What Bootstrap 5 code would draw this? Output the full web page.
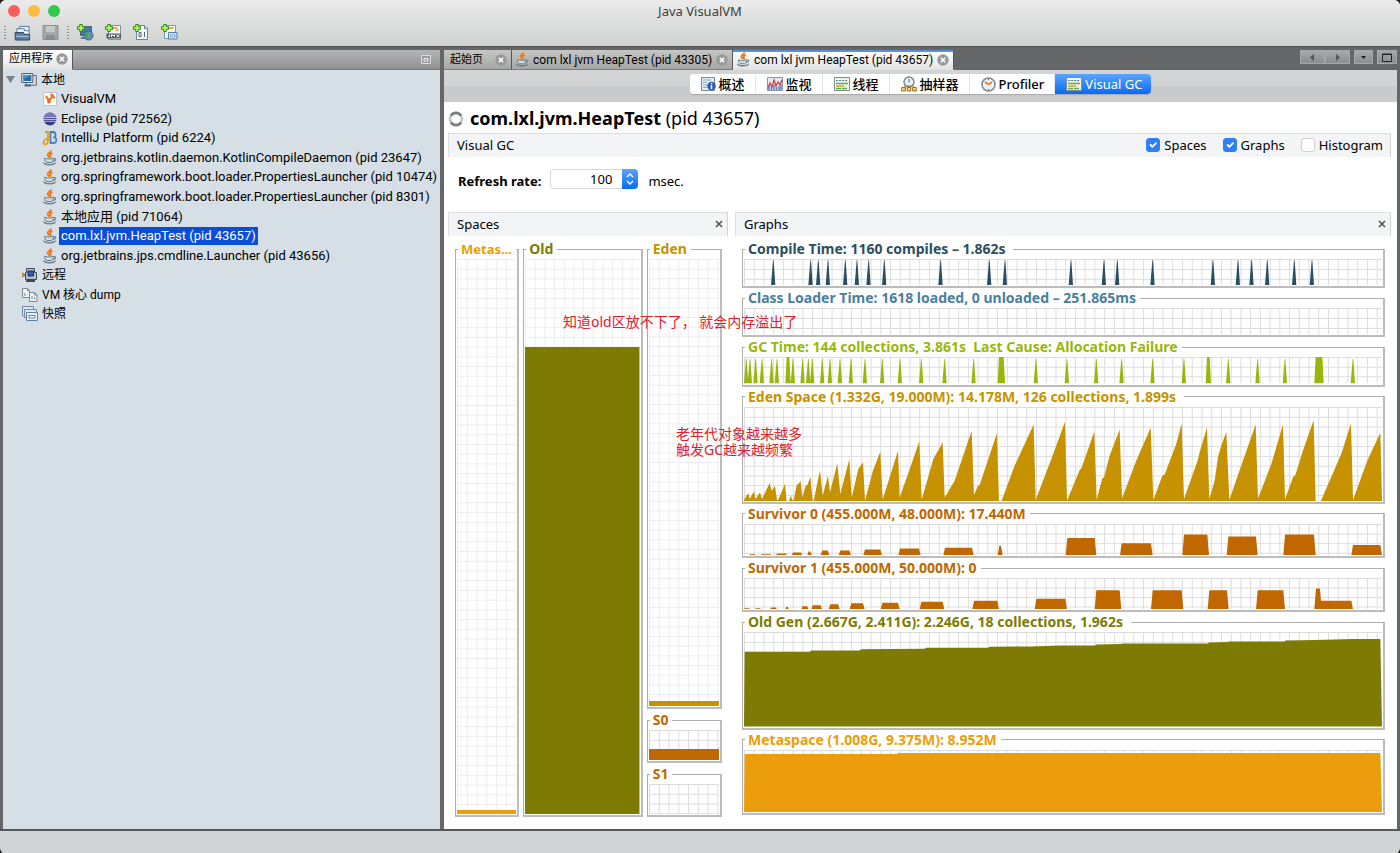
<!DOCTYPE html>
<html lang="zh-CN">
<head>
<meta charset="utf-8">
<meta name="viewport" content="width=device-width, initial-scale=1">
<title>Java VisualVM</title>
<link rel="stylesheet" href="https://cdn.jsdelivr.net/npm/bootstrap@5.3.0/dist/css/bootstrap.min.css">
<style>
  body { font: 13px/16px "Noto Sans", "Noto Sans CJK SC", sans-serif; color: #000; background: #1c1c1c; }
  button, input { font: inherit; color: inherit; }
  svg { display: block; flex: none; }
  .frame { min-height: 100vh; background: #d1d3d4; border-radius: 6px; overflow: hidden; }
  .titlebar { background: linear-gradient(#ebebeb, #cfd0d0); border-bottom: 1px solid #4f5254; }
  .caption { height: 22px; line-height: 22px; color: #3c3c3c; }
  .lights { position: absolute; left: 8px; top: 5px; }
  .light { width: 12px; height: 12px; border-radius: 50%; }
  .toolbar-row { height: 24px; padding: 0 4px 3px; }
  .tools { gap: 11px; }
  .grip { width: 2px; height: 14px; background: repeating-linear-gradient(#8f8f8f 0 1px, transparent 1px 3px); }
  .bare { border: 0; background: none; padding: 0; }
  .workspace { background: #646668; padding: 3px 3px 0; gap: 4px; border-bottom: 2px solid #55585a; }
  .side { width: 437px; background: #d5dfe5; flex: none; }
  .side-tabs { height: 20px; background: linear-gradient(#b4b5b7, #909193); border-bottom: 1px solid #77797b; }
  .doc-tabs { height: 20px; background: #656668; }
  .tab-item { font: 12px/18px Roboto, "Noto Sans CJK SC", sans-serif; gap: 3px; padding-left: 3px; background: linear-gradient(#c6c7c4, #a6a7a5); border-right: 1px solid #55585a; border-bottom: 1px solid #7a7c7e; height: 20px; color: #000; white-space: nowrap; }
  .tab-item.cjk { font-size: 11px; padding-left: 6px; }
  .tab-item.current { background: linear-gradient(#fff, #e2e4e6); border-bottom-color: #dfe1e3; }
  .doc-tabs .tab-item.current { box-shadow: inset 0 2px #5a90dc; }
  .doc-tab { width: 221px; }
  .home-tab { width: 68px; }
  .navbtn { height: 14px; border: 1px solid #a6a7a8; background: linear-gradient(#a8a9aa, #8b8c8d); display: flex; align-items: center; justify-content: center; }
  .tree { height: 254px; display: grid; grid-auto-rows: 1fr; font: 13px/18px Roboto, "Noto Sans CJK SC", sans-serif; padding: 0 0 0 3px; margin: 0; list-style: none; white-space: nowrap; }
  .tree li { display: flex; align-items: center; gap: 2px; }
  .tree .cjk { font-size: 12px; }
  .tree li.child { padding-left: 36px; gap: 1px; }
  .tree li.top { padding-left: 16px; }
  .tree a { color: #000; text-decoration: none; padding: 0 2px; }
  .tree a.sel { background: #0a4ed8; color: #fff; }
  .seg-strip { height: 32px; background: linear-gradient(#d3d4d6 50%, #c9cacb 50%); }
  .seg { height: 20px; border-radius: 4px; background: #fff; box-shadow: 0 1px 1px #aaa; overflow: hidden; }
  .seg button { border: 0; background: #fff; border-right: 1px solid #e6e6e6; padding: 0 10px 0 11px; display: flex; align-items: center; gap: 3px; white-space: nowrap; }
  .seg button.active { background: linear-gradient(#5ba4fb, #0a6af5); color: #fff; border: 0; padding: 0 9px 0 11px; }
  .seg span { font-weight: 500; }
  .page { background: #fff; padding: 0 6px 0 4px; }
  .heading { font-size: 18px; line-height: 22px; padding-top: 5px; height: 31px; margin: 0; font-weight: 400; gap: 6px; }
  .bar { background: #f2f4f5; border-top: 1px solid #dcdedf; border-left: 1px solid #dcdedf; border-right: 1px solid #d0d2d3; height: 24px; padding: 0 7px 1px 8px; }
  .bar .form-check-input { width: 14px; height: 14px; margin: 0; border-radius: 3px; border-color: #cfcfcf; }
  .bar .form-check-input:checked { background-color: #2f7ff5; border-color: #2f7ff5; }
  .rate { height: 55px; padding: 12px 0 0 10px; }
  .spin { width: 88px; height: 20px; margin: 0 10px 0 9px; }
  .spin input { width: 72px; border: 1px solid #d9d9d9; border-right: 0; border-radius: 4px 0 0 4px; padding: 0 10px 0 4px; text-align: right; }
  .spin button { width: 16px; border: 0; padding: 0; border-radius: 0 4px 4px 0; background: linear-gradient(#5ba4fb, #0a6af5); display: flex; align-items: center; justify-content: center; }
  .panes { gap: 7px; padding-bottom: 12px; position: relative; }
  .spaces { width: 280px; flex: none; }
  .spaces-body { padding: 5px 6px 0 7px; display: grid; grid-template-columns: 64fr 119fr 75fr; gap: 4px; }
  .graphs-body { padding: 5px 6px 2px 7px; gap: 2px; }
  fieldset { display: flex; flex-direction: column; border: 1px solid #adadad; border-right: 2px solid #bcbcbc; border-bottom: 2px solid #bcbcbc; padding: 2px 1px 1px; margin: 0; min-width: 0; min-height: 0; }
  legend { float: none; width: auto; font-size: 14px; line-height: 16px; height: 16px; font-weight: 700; margin: 0 0 0 1px; padding: 0 4px 0 3px; white-space: pre; }
  .w-meta legend { font-size: 13px; }
  .plot { width: 100%; flex: 1 1 0; min-height: 0; }
  .c-compile { color: #2b4f62; } .c-class { color: #4a7f9d; } .c-gc { color: #99b70a; }
  .c-eden { color: #c69200; } .c-surv { color: #c16700; } .c-old { color: #7d7b03; } .c-meta { color: #eb9d0d; }
  .tiny { flex: 47 1 47px; } .small-plot { flex: 52 1 52px; } .tall { flex: 115 1 115px; } .mid { flex: 83 1 83px; }
  .w-eden { gap: 3px; min-width: 0; }
  .h-eden { flex: 468 1 468px; } .h-surv { flex: 51 1 51px; }
  .note { position: absolute; color: #e0202c; font-size: 14px; line-height: 16px; white-space: nowrap; }
  .note-a { left: 115px; top: 102px; } .note-b { left: 228px; top: 214px; }
  .status { height: 23px; }
</style>
</head>
<body>
<svg width="0" height="0" class="position-absolute" aria-hidden="true">
  <defs>
    <pattern id="grid" width="29.2" height="29.2" patternUnits="userSpaceOnUse"><path d="M0 1.5H29.2M1.5 0V29.2" stroke="#dcdcdf" stroke-width="3" fill="none"/></pattern>
    <pattern id="faint" width="29.2" height="29.2" patternUnits="userSpaceOnUse"><path d="M0 1.5H29.2M1.5 0V29.2" stroke="#ededef" stroke-width="3" fill="none"/></pattern>
    <symbol id="java" viewBox="0 0 16 16">
      <path d="M8.6.4c1 2-3.200 2.700-2.900 4.700.1 1 1.300 1.500 1.300 2.700M10.400 3c-1.700.7-2.600 1.500-2.200 2.600.3.800.8 1.200.1 2.300" fill="none" stroke="#ee7a1c" stroke-width="1.900"/>
      <path d="M2.600 8.300c2 .9 6.700.9 8.900 0 .1 2-.7 3.800-2.300 4.200H5C3.300 12.100 2.500 10.300 2.600 8.300Z" fill="#d3dde1" stroke="#64808f"/>
      <path d="M11.500 8.700c3-.9 3 2.500-1 2.600" fill="none" stroke="#64808f" stroke-width="1.100"/>
      <path d="M1.300 12.700c2.700 2.300 9.600 2.300 12.300 0-.3 3.100-11.700 3.200-12.300 0Z" fill="#9db2ba" stroke="#5c7582" stroke-width=".8"/>
    </symbol>
    <symbol id="close" viewBox="0 0 12 12"><circle cx="6" cy="6" r="5.700" fill="#97999a"/><path d="M3.800 3.800l4.400 4.400M8.200 3.800L3.800 8.200" stroke="#fff" stroke-width="1.600"/></symbol>
    <symbol id="cross" viewBox="0 0 8 8"><path d="M1 1l6 6M7 1L1 7" stroke="#555" stroke-width="1.600"/></symbol>
    <symbol id="plus" viewBox="0 0 8 8"><path d="M2.700.5h2.600v2.200h2.200v2.600H5.300v2.200H2.700V5.300H.5V2.700h2.200Z" fill="#b8f56a" stroke="#2f8a12"/></symbol>
    <symbol id="computer" viewBox="0 0 16 16"><path d="M5 3.500h10.300v9.700H5Z" fill="#dadfe3" stroke="#667"/><path d="M.7 1.500h11.200v9H.7Z" fill="#d6dce2" stroke="#566472"/><path d="M2.300 3h8v6h-8Z" fill="#1f6db5"/><path d="M2.300 3h8L2.300 7Z" fill="#4b95d0"/><path d="M3.500 13.600h6.500" stroke="#566472" stroke-width="2"/></symbol>
    <symbol id="thread" viewBox="0 0 16 14"><path d="M.5.500h15v13H.5Z" fill="#f3f3e4" stroke="#7d8d96"/><path d="M2 3.500h12" stroke="#4c7aa0" stroke-dasharray="2 1"/><path d="M2 6.500h12" stroke="#5bb04b" stroke-width="1.500"/><path d="M2 9h8" stroke="#e99e2b" stroke-width="1.500"/><path d="M2 11.400h12" stroke="#5bb04b" stroke-width="1.500" stroke-dasharray="5 1"/></symbol>
  </defs>
</svg>

<div class="frame d-flex flex-column">
  <header class="titlebar position-relative">
    <div class="lights d-flex"><span class="light me-2" style="background:#fc5f5b"></span><span class="light me-2" style="background:#fdbc40"></span><span class="light" style="background:#34c84a"></span></div>
    <div class="caption text-center">Java VisualVM</div>
    <div class="toolbar-row d-flex align-items-center">
      <span class="grip me-2"></span>
      <div class="tools d-flex">
        <button class="bare" aria-label="打开"><svg width="17" height="16" viewBox="0 0 18 17"><path d="M3 9V4h3V1.500h10V11" fill="#e9f0f8" stroke="#55779a"/><path d="M6 4h5v2h5" fill="none" stroke="#55779a"/><path d="M1 8h9l1 2h5.500v6H1.500Z" fill="#5980a8" stroke="#29435d"/><path d="M2 12h14" stroke="#bdd0e5"/></svg></button>
        <button class="bare" aria-label="保存"><svg width="17" height="17" viewBox="0 0 17 17"><path d="M1 1.500h15v14H1Z" fill="#a4a8ab" stroke="#8b8f92"/><path d="M4 2h9v6H4Z" fill="#c5c8ca"/><path d="M4 11h9v5H4Z" fill="#888d90"/></svg></button>
      </div>
      <span class="grip ms-2 me-2"></span>
      <div class="tools d-flex">
        <button class="bare" aria-label="添加 JMX 连接"><svg width="17" height="17" viewBox="0 0 17 17"><path d="M3.500 2.500h11v9h-11Z" fill="#3a7db5" stroke="#56636f"/><path d="M4 14h7" stroke="#6b757c" stroke-width="2"/><circle cx="11.500" cy="11.500" r="4.500" fill="#5f95c5" stroke="#3a6189"/><path d="M9 9c3-2 3 1 2 2s1 3-.5 3.500S9 12 8.500 11.500ZM13 9l2 3-2 2Z" fill="#4fa33e"/><use href="#plus" width="8" height="8"/></svg></button>
        <button class="bare" aria-label="添加 JMX"><svg width="17" height="17" viewBox="0 0 17 17"><path d="M3.500 1.500h12v14h-12Z" fill="#f4f6f6" stroke="#7d95a2"/><path d="M8 5c2-3 3 1 4-2M11 6c1 1 2 0 2-1" stroke="#ed9035" stroke-width="1.500" fill="none"/><path d="M1.500 9.500h14.500v5H1.500Z" fill="#4c5b61"/><path d="M3 12.500h1.500V10.500M6.500 13v-2.300l1.500 1 1.500-1V13M11.500 10.500l3 2.500M14.500 10.500l-3 2.500" fill="none" stroke="#fff"/><use href="#plus" width="8" height="8"/></svg></button>
        <button class="bare" aria-label="添加 VM 核心 dump"><svg width="17" height="17" viewBox="0 0 17 17"><path d="M3.500 1.500h8l3 3v11h-11Z" fill="#f4f6f6" stroke="#6d8797"/><path d="M11.500 1.500v3h3" fill="#d0dce4" stroke="#6d8797"/><path d="M6 8.500h2v4H6ZM11.500 8v5" fill="none" stroke="#4d6b7d"/><use href="#plus" width="8" height="8"/></svg></button>
        <button class="bare" aria-label="添加快照"><svg width="17" height="17" viewBox="0 0 17 17"><path d="M3.500 1.500h11v13h-11Z" fill="#f4f6f6" stroke="#7d95a2"/><path d="M8.500 5c1-3 3 1 3.500-2" stroke="#ed9035" stroke-width="1.500" fill="none"/><path d="M7.500 8.500h8.500v6.500H7.500Z" fill="#d7e5f6" stroke="#4c7db5"/><path d="M9.500 10.800h4.500v2H9.500Z" fill="#fff" stroke="#7ca2cf"/><use href="#plus" width="8" height="8"/></svg></button>
      </div>
    </div>
  </header>

  <main class="workspace d-flex flex-grow-1">
    <aside class="side">
      <div class="side-tabs d-flex align-items-center justify-content-between pe-2">
        <div class="tab-item cjk current d-flex align-items-center pe-1"><span>应用程序</span><button class="bare" aria-label="关闭"><svg width="12" height="12"><use href="#close"/></svg></button></div>
        <button class="bare" aria-label="最小化"><svg width="12" height="12" viewBox="0 0 12 12"><path d="M1.500 1.500h9v8h-9Z" fill="#9b9d9e" stroke="#ddd"/><path d="M4 4.500h4v2.500H4Z" fill="none" stroke="#eee"/></svg></button>
      </div>
      <ul class="tree">
        <li><svg width="9" height="7" viewBox="0 0 9 7" class="me-1"><path d="M0 0h9L4.500 7Z" fill="#7c8185"/></svg><svg width="16" height="16"><use href="#computer"/></svg><a href="#" class="cjk">本地</a></li>
        <li class="child"><svg width="16" height="16" viewBox="0 0 16 16"><path d="M1.500 1.500h13v13h-13Z" fill="#fff" stroke="#b8c5cf"/><path d="M3.500 4l2.500 2 .5 1.500 2-1 1-3 2.500-.5-.5 3-2.500 2.500-.5 3.500-3 .5-.5-4-1.500-2Z" fill="#ef6c1d"/><circle cx="12" cy="6.500" r="1.200" fill="#ef6c1d"/><circle cx="9" cy="3.500" r="1" fill="#ef6c1d"/></svg><a href="#">VisualVM</a></li>
        <li class="child"><svg width="16" height="16" viewBox="0 0 16 16"><circle cx="8" cy="8" r="6.500" fill="#3a3a86"/><path d="M3.500 3.400A6.500 6.500 0 0 1 13 4l1 3H2Z" fill="#7878bd"/><path d="M1 6.700h14M1 8.500h14M1.500 10.300h13" stroke="#d5d8ec" stroke-width=".8"/></svg><a href="#">Eclipse (pid 72562)</a></li>
        <li class="child"><svg width="16" height="16" viewBox="0 0 16 16"><path d="M3 2h3v8c0 6-5 5-4.500 2S7 9 7 6" fill="none" stroke="#ec9a1a" stroke-width="1.800"/><path d="M8.500 2v11h3c4 0 3.500-6 0-5.500C14.500 7 14 2 11 2Z" fill="none" stroke="#4780bd" stroke-width="1.800"/></svg><a href="#">IntelliJ Platform (pid 6224)</a></li>
        <li class="child"><svg width="16" height="16"><use href="#java"/></svg><a href="#">org.jetbrains.kotlin.daemon.KotlinCompileDaemon (pid 23647)</a></li>
        <li class="child"><svg width="16" height="16"><use href="#java"/></svg><a href="#">org.springframework.boot.loader.PropertiesLauncher (pid 10474)</a></li>
        <li class="child"><svg width="16" height="16"><use href="#java"/></svg><a href="#">org.springframework.boot.loader.PropertiesLauncher (pid 8301)</a></li>
        <li class="child"><svg width="16" height="16"><use href="#java"/></svg><a href="#">本地应用 (pid 71064)</a></li>
        <li class="child"><svg width="16" height="16"><use href="#java"/></svg><a href="#" class="sel">com.lxl.jvm.HeapTest (pid 43657)</a></li>
        <li class="child"><svg width="16" height="16"><use href="#java"/></svg><a href="#">org.jetbrains.jps.cmdline.Launcher (pid 43656)</a></li>
        <li class="top"><svg width="16" height="16" viewBox="0 0 16 16"><path d="M4.500 1.500h8v4h2v7h-11v-7h1Z" fill="#b5c2cb" stroke="#3e4d5a"/><path d="M6 4h5.500v5H6Z" fill="#2c5fae" stroke="#23354a"/><path d="M4 14h9" stroke="#3e4d5a" stroke-width="2"/><path d="M0 6l3 2-3 2" fill="#e0a431" stroke="#7c6a3d"/></svg><a href="#" class="cjk">远程</a></li>
        <li class="top"><svg width="16" height="16" viewBox="0 0 16 16"><path d="M.5 1.500h5l2 2v7h-7Z" fill="#eef2f4" stroke="#7b8b95"/><path d="M7.500 5.500h5l2.500 2.500v6.500H7.500Z" fill="#eef2f4" stroke="#7b8b95"/><path d="M5.500 1.500v2h2M12.500 5.500V8H15M3 9v-3M10 12V9M12.500 12v-2" fill="none" stroke="#7b8b95"/></svg><a href="#" class="cjk">VM 核心 dump</a></li>
        <li class="top"><svg width="16" height="16" viewBox="0 0 16 16"><path d="M.5 4V.5h11V3M.5 4v6H3" fill="#dfe8f3" stroke="#7288a4"/><path d="M2.500 3.500h12v8h-12Z" fill="#dfe8f3" stroke="#7288a4"/><path d="M4.500 6.500h11v8h-11Z" fill="#e6eef8" stroke="#6681a4"/><path d="M7 9.500h6v2.500H7Z" fill="#fff" stroke="#6681a4"/></svg><a href="#" class="cjk">快照</a></li>
      </ul>
    </aside>

    <section class="flex-grow-1 d-flex flex-column" style="min-width:0">
      <div class="doc-tabs d-flex align-items-center">
        <div class="tab-item cjk home-tab d-flex align-items-center"><span>起始页</span><button class="bare ms-auto me-1" aria-label="关闭"><svg width="12" height="12"><use href="#close"/></svg></button></div>
        <div class="tab-item doc-tab d-flex align-items-center"><svg width="15" height="15"><use href="#java"/></svg><span>com lxl jvm HeapTest (pid 43305)</span><button class="bare ms-auto me-1" aria-label="关闭"><svg width="12" height="12"><use href="#close"/></svg></button></div>
        <div class="tab-item doc-tab current d-flex align-items-center"><svg width="15" height="15"><use href="#java"/></svg><span>com lxl jvm HeapTest (pid 43657)</span><button class="bare ms-auto me-1" aria-label="关闭"><svg width="12" height="12"><use href="#close"/></svg></button></div>
        <div class="d-flex ms-auto align-self-start">
          <button class="navbtn px-2" aria-label="上一个"><svg width="7" height="7" viewBox="0 0 7 7"><path d="M5 0v7L1 3.500Z" fill="#555"/></svg></button>
          <button class="navbtn px-2 me-1" aria-label="下一个"><svg width="7" height="7" viewBox="0 0 7 7"><path d="M2 0v7l4-3.500Z" fill="#555"/></svg></button>
          <button class="navbtn px-1 me-1" aria-label="列表"><svg width="9" height="7" viewBox="0 0 9 7"><path d="M2 2h5L4.500 5Z" fill="#222"/></svg></button>
          <button class="navbtn px-1" aria-label="最大化"><svg width="10" height="9" viewBox="0 0 10 9"><path d="M.5 1h9v7.500h-9Z" fill="none" stroke="#222"/><path d="M0 1.500h10" stroke="#222"/></svg></button>
        </div>
      </div>
      <div class="seg-strip d-flex justify-content-center align-items-start pt-1">
        <div class="seg d-flex">
          <button><svg width="15" height="14" viewBox="0 0 15 14"><path d="M.5.500h13v13H.5Z" fill="#e4edf3" stroke="#74899a"/><path d="M2 3h8M2 5.500h4M2 8h4M2 10.500h4" stroke="#90a6b6"/><circle cx="10.500" cy="9" r="4.300" fill="#2a5cb3"/><path d="M10.500 8v4M10.500 6v1.200" stroke="#fff" stroke-width="1.500"/></svg><span>概述</span></button>
          <button><svg width="16" height="14" viewBox="0 0 16 14"><path d="M.5.500h15v13H.5Z" fill="#e5eaf2" stroke="#8a97a8"/><path d="M1 11l2-5 2 4 2-7 2 6 2-4 2 3 2-5" fill="none" stroke="#dc3b35" stroke-width="1.300"/><path d="M2 13V8M4.500 13V9.500M7 13V8M9.500 13v-3M12 13V9M14 13V8" stroke="#4a7ec2" stroke-width="1.400"/></svg><span>监视</span></button>
          <button><svg width="16" height="14"><use href="#thread"/></svg><span>线程</span></button>
          <button><svg width="16" height="16" viewBox="0 0 16 16"><circle cx="8" cy="6" r="5" fill="#eaf1f5" stroke="#78858f" stroke-width="1.400"/><path d="M8 3v3.500" stroke="#3a6ca6"/><path d="M3 10h10" stroke="#a87a20"/><path d="M.7 11.500h3.600V15H.7ZM6.200 11.500h3.600V15H6.200ZM11.700 11.500h3.600V15h-3.600Z" fill="#f7d382" stroke="#986914"/></svg><span>抽样器</span></button>
          <button><svg width="15" height="15" viewBox="0 0 15 15"><circle cx="7.500" cy="7.500" r="6.500" fill="#eef2f4" stroke="#7f8b95" stroke-width="1.600"/><path d="M7.500 7.500L4 5M7.500 7.500L11 5" stroke="#e8791f" stroke-width="1.600"/><path d="M7.500 2v1.200M7.500 12v1.200" stroke="#555"/></svg><span>Profiler</span></button>
          <button class="active"><svg width="16" height="14"><use href="#thread"/></svg>Visual GC</button>
        </div>
      </div>
      <div class="page flex-grow-1 d-flex flex-column">
        <h1 class="heading d-flex"><svg width="16" height="16" viewBox="0 0 16 16" class="mt-1"><circle cx="8" cy="8" r="6" fill="none" stroke="#c2c4c4" stroke-width="2.600"/><path d="M3 4.500A6 6 0 0 1 13 4.700M13 11.500A6 6 0 0 1 3 11.500" fill="none" stroke="#7d8080" stroke-width="2.600"/></svg><span><b>com.lxl.jvm.HeapTest</b> (pid 43657)</span></h1>
        <div class="bar d-flex align-items-center">
          <span class="me-auto">Visual GC</span>
          <div class="d-flex align-items-center me-3"><input class="form-check-input me-1" type="checkbox" id="cs" checked><label for="cs">Spaces</label></div>
          <div class="d-flex align-items-center me-3"><input class="form-check-input me-1" type="checkbox" id="cg" checked><label for="cg">Graphs</label></div>
          <div class="d-flex align-items-center"><input class="form-check-input me-1" type="checkbox" id="ch"><label for="ch">Histogram</label></div>
        </div>
        <div class="rate d-flex align-items-start">
          <label for="rr" class="fw-bold pt-1">Refresh rate:</label>
          <div class="spin d-flex"><input id="rr" type="text" value="100"><button aria-label="调整"><svg width="10" height="14" viewBox="0 0 10 14"><path d="M2 5l3-3 3 3M2 9l3 3 3-3" fill="none" stroke="#fff" stroke-width="1.400"/></svg></button></div>
          <span class="pt-1">msec.</span>
        </div>
        <div class="panes d-flex flex-grow-1">
          <section class="spaces d-flex flex-column">
            <div class="bar d-flex align-items-center justify-content-between pe-1"><span>Spaces</span><button class="bare" aria-label="关闭"><svg width="8" height="8"><use href="#cross"/></svg></button></div>
            <div class="spaces-body flex-grow-1">
              <fieldset class="w-meta c-meta"><legend>Metas...</legend><svg class="plot" viewBox="0 0 177 1665" preserveAspectRatio="none"><path fill="url(#faint)" d="M0 0H177V1665H0Z"/><path fill="currentColor" d="M0 1653H177V1665H0Z"/></svg></fieldset>
              <fieldset class="c-old"><legend>Old</legend><svg class="plot" viewBox="0 0 345 1665" preserveAspectRatio="none"><path fill="url(#faint)" d="M0 0H345V1665H0Z"/><path fill="currentColor" d="M0 264H345V1665H0Z"/></svg></fieldset>
              <div class="w-eden d-flex flex-column">
                <fieldset class="h-eden c-eden"><legend>Eden</legend><svg class="plot" viewBox="0 0 210 1350" preserveAspectRatio="none"><path fill="url(#faint)" d="M0 0H210V1350H0Z"/><path fill="currentColor" d="M0 1335H210V1350H0Z"/></svg></fieldset>
                <fieldset class="h-surv c-surv"><legend>S0</legend><svg class="plot" viewBox="0 0 210 90" preserveAspectRatio="none"><path fill="url(#grid)" d="M0 0H210V90H0Z"/><path fill="currentColor" d="M0 57H210V90H0Z"/></svg></fieldset>
                <fieldset class="h-surv c-surv"><legend>S1</legend><svg class="plot" viewBox="0 0 210 90" preserveAspectRatio="none"><path fill="url(#grid)" d="M0 0H210V90H0Z"/></svg></fieldset>
              </div>
            </div>
          </section>
          <section class="flex-grow-1 d-flex flex-column" style="min-width:0">
            <div class="bar d-flex align-items-center justify-content-between pe-1"><span>Graphs</span><button class="bare" aria-label="关闭"><svg width="8" height="8"><use href="#cross"/></svg></button></div>
            <div class="graphs-body d-flex flex-column flex-grow-1">
              <fieldset class="tiny c-compile"><legend>Compile Time: 1160 compiles – 1.862s </legend><svg class="plot" data-kind="spikes" data-box="60 137" data-top="64" data-values="116 228 251 280 332 367 402 449 618 764 811 1009 1108 1148 1254 1435 1510 1551 1598 1679 1732"></svg></fieldset>
              <fieldset class="tiny c-class"><legend>Class Loader Time: 1618 loaded, 0 unloaded – 251.865ms</legend><svg class="plot" data-kind="spikes" data-box="60 137" data-top="64" data-values=""></svg></fieldset>
              <fieldset class="tiny c-gc"><legend>GC Time: 144 collections, 3.861s  Last Cause: Allocation Failure</legend><svg class="plot" data-kind="spikes" data-box="351 430" data-top="357" data-values="35 46 63 82 111 127 152-168 175 204 221 233 263 286 316 349 391 443 496 560 630 717 789-811 904 997 1085 1161 1254 1348 1413-1429 1481 1569 1651 1739-1767 1855"></svg></fieldset>
              <fieldset class="tall c-eden"><legend>Eden Space (1.332G, 19.000M): 14.178M, 126 collections, 1.899s </legend><svg class="plot" data-kind="area" data-box="65 347" data-values="28,347 28,343 41,322 45,340 58,317 63,340 76,320 82,340 105,292 111,315 121,301 127,343 131,341 151,294 156,347 162,347 169,330 173,343 177,343 186,298 190,296 198,286 203,335 206,325 213,300 218,298 227,273 234,345 237,345 256,254 264,330 280,270 286,320 308,234 317,325 344,220 351,336 371,250 385,230 391,345 415,255 437,199 444,341 490,196 495,335 520,265 554,167 561,342 596,220 624,171 630,335 660,285 711,136 718,327 730,300 735,298 787,143 793,347 800,347 840,240 897,117 903,343 950,220 991,109 997,345 1035,253 1040,248 1050,220 1079,138 1086,341 1103,278 1108,275 1125,210 1155,132 1162,338 1205,225 1248,127 1256,343 1283,270 1290,267 1325,175 1341,114 1348,340 1390,222 1395,200 1417,126 1424,340 1440,285 1450,215 1460,180 1475,139 1484,343 1525,225 1563,117 1570,338 1610,235 1645,117 1651,341 1675,275 1682,268 1705,195 1737,104 1743,347 1758,347 1820,205 1849,114 1855,343 1898,225 1937,142 1942,347"></svg></fieldset>
              <fieldset class="small-plot c-surv"><legend>Survivor 0 (455.000M, 48.000M): 17.440M</legend><svg class="plot" data-kind="blocks" data-box="415 510" data-values="44-62,507 79-109,507 125-156,505 172-202,502 218-231,499 258-284,496 312-349,496 386-442,493 491-558,490 626-717,487 789-804,481 993-1085,458 1156-1254,474 1343-1423,447 1476-1569,453 1646-1743,447 1850-1942,479"></svg></fieldset>
              <fieldset class="small-plot c-surv"><legend>Survivor 1 (455.000M, 50.000M): 0</legend><svg class="plot" data-kind="blocks" data-box="578 674" data-values="28-45,671 62-78,671 107-126,669 152-162,667 200-221,665 230-262,662 282-315,659 345-390,656 438-495,654 555-629,651 713-793,648 900-997,642 1080-1160,616 1249-1346,616 1419-1482,616 1564-1651,616 1739-1761,610 1750-1855,648"></svg></fieldset>
              <fieldset class="tall c-old"><legend>Old Gen (2.667G, 2.411G): 2.246G, 18 collections, 1.962s </legend><svg class="plot" data-kind="area" data-box="97 378" data-values="28,378 30,156 225,156 230,152 375,152 380,148 570,147 575,144 760,144 765,141 890,140 975,137 1082,137 1084,134 1160,133 1162,131 1420,131 1422,128 1480,127 1482,125 1650,125 1652,122 1743,121 1853,118 1937,118 1942,378"></svg></fieldset>
              <fieldset class="mid c-meta"><legend>Metaspace (1.008G, 9.375M): 8.952M</legend><svg class="plot" data-kind="area" data-box="447 635" data-values="28,635 30,459 486,459 490,456 1937,456 1942,635"></svg></fieldset>
            </div>
          </section>
          <div class="note note-a">知道old区放不下了， 就会内存溢出了</div>
          <div class="note note-b">老年代对象越来越多<br>触发GC越来越频繁</div>
        </div>
      </div>
    </section>
  </main>
  <footer class="status"></footer>
</div>
<script>
  // Each plot stretches to its panel; values share one time axis from 28 to 1942.
  document.querySelectorAll('svg[data-kind]').forEach(svg => {
    const [top, base] = svg.dataset.box.split(' ').map(Number);
    const items = svg.dataset.values.split(' ').filter(Boolean);
    const peak = svg.dataset.top;
    let d = '';
    if (svg.dataset.kind === 'area') d = 'M' + items.join('L') + 'Z';
    if (svg.dataset.kind === 'spikes') items.forEach(v => {
      const [a, b] = v.split('-').map(Number);
      d += b ? `M${a} ${base}L${a + 4} ${top}H${b - 4}L${b} ${base}Z` : `M${a - 7} ${base}L${a - 1} ${peak}H${a + 1}L${a + 6} ${base}Z`;
    });
    if (svg.dataset.kind === 'blocks') items.forEach(v => {
      const [span, h] = v.split(',');
      const [a, b] = span.split('-').map(Number);
      const s = Math.min(5, (base - h) / 3);
      d += `M${a} ${base}L${a + s} ${h}H${b - s}L${b} ${base}Z`;
    });
    svg.setAttribute('viewBox', `0 0 1914 ${base - top}`);
    svg.setAttribute('preserveAspectRatio', 'none');
    svg.innerHTML = `<path fill="url(#grid)" d="M0 0H1914V${base - top}H0Z"/><path fill="currentColor" transform="translate(-28 ${-top})" d="${d}"/>`;
  });
</script>
<script src="https://cdn.jsdelivr.net/npm/bootstrap@5.3.0/dist/js/bootstrap.bundle.min.js"></script>
</body>
</html>
